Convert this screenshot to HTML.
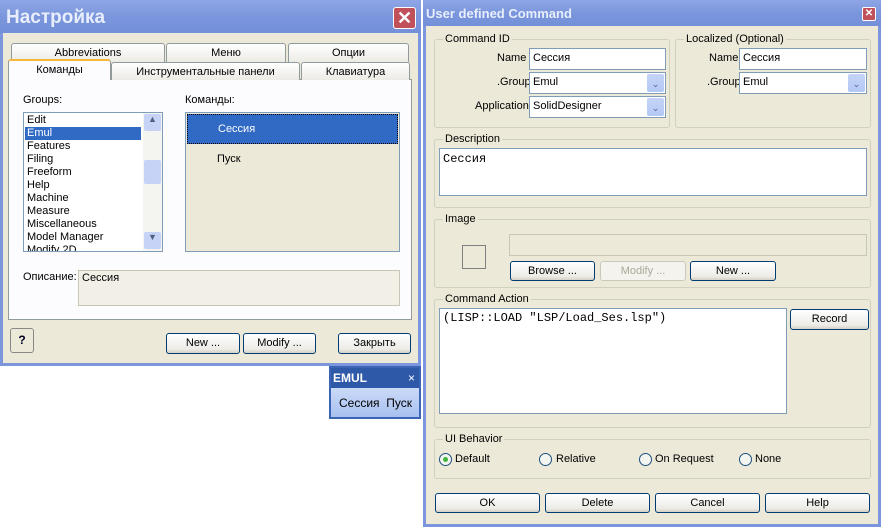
<!DOCTYPE html>
<html><head><meta charset="utf-8"><style>
*{box-sizing:border-box;margin:0;padding:0}
body{width:881px;height:527px;background:#fff;position:relative;overflow:hidden;font-family:"Liberation Sans",sans-serif;font-size:11px;color:#000}
.a{position:absolute}
.win{background:#ece9d8}
.title{background:linear-gradient(#8ea6e6,#7b96dc 50%,#7390d8);color:#e8eefc;font-weight:bold}
.btn{position:absolute;border:1px solid #003c74;border-radius:3px;background:linear-gradient(#fff,#ecebe6 80%,#d6d0c5);text-align:center;font-size:11px;line-height:18px}
.box{position:absolute;background:#fff;border:1px solid #7f9db9}
.grp{position:absolute;border:1px solid #d0d0bf;border-radius:3px}
.gl{position:absolute;top:-7px;left:8px;background:#ece9d8;padding:0 2px;font-size:11px}
.dd{position:absolute;right:1px;top:1px;width:17px;bottom:1px;background:linear-gradient(#c6d3f7,#b4c8f6);border-radius:2px;color:#4d6185;font-size:9px;text-align:center;line-height:20px}
.tab{position:absolute;border:1px solid #919b9c;border-bottom:none;border-radius:3px 3px 0 0;background:linear-gradient(#fff,#ecebe5);text-align:center;line-height:19px}
.rad{position:absolute;width:13px;height:13px;border:1px solid #1c5180;border-radius:50%;background:#f4f4f0}
</style></head><body>
<div class="a win" style="left:0;top:0;width:421px;height:366px;border:3px solid #7b96dc;border-top:none"></div>
<div class="a title" style="left:0;top:0;width:421px;height:33px;font-size:19px;padding:7px 6px">Настройка</div>
<div class="a" style="left:393px;top:7px;width:23px;height:22px;background:#c0505a;border:1px solid #fff;border-radius:3px;color:#fff;font-weight:bold;font-size:18px;text-align:center;line-height:20px">✕</div>
<div class="tab" style="left:11px;top:43px;width:154px;height:19px">Abbreviations</div>
<div class="tab" style="left:166px;top:43px;width:120px;height:19px">Меню</div>
<div class="tab" style="left:288px;top:43px;width:121px;height:19px">Опции</div>
<div class="a" style="left:8px;top:79px;width:404px;height:241px;background:#fcfcfe;border:1px solid #919b9c"></div>
<div class="tab" style="left:8px;top:59px;width:103px;height:21px;background:#fcfcfe;border-top:2px solid #f6b73d">Команды</div>
<div class="tab" style="left:111px;top:62px;width:189px;height:18px;line-height:18px">Инструментальные панели</div>
<div class="tab" style="left:301px;top:62px;width:109px;height:18px;line-height:18px">Клавиатура</div>
<div class="a" style="left:23px;top:94px">Groups:</div>
<div class="a" style="left:185px;top:94px">Команды:</div>
<div class="box" style="left:23px;top:112px;width:140px;height:140px;overflow:hidden;line-height:13px;padding:1px 0 0 3px">Edit<br><span style="background:#316ac5;color:#fff;display:block;margin-left:-2px;padding-left:2px;width:116px">Emul</span>Features<br>Filing<br>Freeform<br>Help<br>Machine<br>Measure<br>Miscellaneous<br>Model Manager<br>Modify 2D</div>
<div class="a" style="left:143px;top:113px;width:19px;height:138px;background:#f4f4f0"></div>
<div class="a" style="left:144px;top:114px;width:17px;height:17px;background:#c6d3f7;border-radius:2px;color:#4d6185;text-align:center;font-size:9px">▲</div>
<div class="a" style="left:144px;top:160px;width:17px;height:24px;background:#c6d3f7;border-radius:2px"></div>
<div class="a" style="left:144px;top:232px;width:17px;height:17px;background:#c6d3f7;border-radius:2px;color:#4d6185;text-align:center;font-size:9px">▼</div>
<div class="a" style="left:185px;top:112px;width:215px;height:140px;background:#ece9d8;border:1px solid #7f9db9"></div>
<div class="a" style="left:187px;top:114px;width:211px;height:30px;background:#316ac5;border:1px dotted #000;color:#fff;padding:8px 30px">Сессия</div>
<div class="a" style="left:217px;top:153px">Пуск</div>
<div class="a" style="left:23px;top:271px">Описание:</div>
<div class="a" style="left:78px;top:270px;width:322px;height:36px;background:#f1efe6;border:1px solid #c8c6b8;padding:1px 3px">Сессия</div>
<div class="btn" style="left:10px;top:328px;width:24px;height:25px;border-color:#888;background:#ece9d8;font-weight:bold;font-size:12px;line-height:23px;color:#002">?</div>
<div class="btn" style="left:166px;top:333px;width:74px;height:21px">New ...</div>
<div class="btn" style="left:243px;top:333px;width:73px;height:21px">Modify ...</div>
<div class="btn" style="left:338px;top:333px;width:73px;height:21px">Закрыть</div>
<div class="a" style="left:329px;top:366px;width:92px;height:53px;background:linear-gradient(#e3ecfc,#a8c0f0);border:2px solid #3c64b4"></div>
<div class="a" style="left:331px;top:368px;width:88px;height:20px;background:#2e59a8;color:#fff;font-weight:bold;font-size:12px;padding:3px 2px">EMUL<span style="position:absolute;right:4px;font-weight:normal">×</span></div>
<div class="a" style="left:339px;top:396px;font-size:12px">Сессия&nbsp; Пуск</div>
<div class="a win" style="left:423px;top:0;width:458px;height:527px;border:3px solid #7b96dc;border-top:none"></div>
<div class="a title" style="left:423px;top:0;width:458px;height:26px;font-size:13px;padding:6px 3px">User defined Command</div>
<div class="a" style="left:862px;top:7px;width:14px;height:14px;background:#c0505a;border:1px solid #fff;border-radius:2px;color:#fff;font-size:10px;text-align:center;line-height:12px;font-weight:bold">✕</div>
<div class="grp" style="left:434px;top:39px;width:236px;height:89px"><span class="gl">Command ID</span></div>
<div class="a" style="left:497px;top:52px">Name</div>
<div class="box" style="left:529px;top:48px;width:137px;height:22px;padding:3px">Сессия</div>
<div class="a" style="left:497px;top:76px">.Group</div>
<div class="box" style="left:529px;top:72px;width:137px;height:22px;padding:3px">Emul<div class="dd">⌄</div></div>
<div class="a" style="left:475px;top:100px">Application</div>
<div class="box" style="left:529px;top:96px;width:137px;height:22px;padding:3px">SolidDesigner<div class="dd">⌄</div></div>
<div class="grp" style="left:675px;top:39px;width:196px;height:89px"><span class="gl">Localized (Optional)</span></div>
<div class="a" style="left:709px;top:52px">Name</div>
<div class="box" style="left:739px;top:48px;width:128px;height:22px;padding:3px">Сессия</div>
<div class="a" style="left:707px;top:76px">.Group</div>
<div class="box" style="left:739px;top:72px;width:128px;height:22px;padding:3px">Emul<div class="dd">⌄</div></div>
<div class="grp" style="left:434px;top:139px;width:437px;height:69px"><span class="gl">Description</span></div>
<div class="box" style="left:439px;top:148px;width:428px;height:48px;padding:3px;font-family:'Liberation Mono',monospace;font-size:12px">Сессия</div>
<div class="grp" style="left:434px;top:219px;width:437px;height:69px"><span class="gl">Image</span></div>
<div class="a" style="left:462px;top:245px;width:24px;height:24px;border:1px solid #808080"></div>
<div class="a" style="left:509px;top:234px;width:358px;height:22px;border:1px solid #c8c6b8"></div>
<div class="btn" style="left:510px;top:261px;width:85px;height:20px">Browse ...</div>
<div class="btn" style="left:600px;top:261px;width:86px;height:20px;border-color:#cac8bb;background:#f4f3ee;color:#aca899">Modify ...</div>
<div class="btn" style="left:690px;top:261px;width:86px;height:20px">New ...</div>
<div class="grp" style="left:434px;top:299px;width:437px;height:129px"><span class="gl">Command Action</span></div>
<div class="box" style="left:439px;top:308px;width:348px;height:106px;padding:2px 3px;font-family:'Liberation Mono',monospace;font-size:12px">(LISP::LOAD "LSP/Load_Ses.lsp")</div>
<div class="btn" style="left:790px;top:309px;width:79px;height:21px">Record</div>
<div class="grp" style="left:434px;top:439px;width:437px;height:40px"><span class="gl">UI Behavior</span></div>
<div class="rad" style="left:439px;top:453px"><div style="position:absolute;left:3px;top:3px;width:5px;height:5px;border-radius:50%;background:#3fb53f"></div></div>
<div class="a" style="left:455px;top:453px">Default</div>
<div class="rad" style="left:539px;top:453px"></div><div class="a" style="left:556px;top:453px">Relative</div>
<div class="rad" style="left:639px;top:453px"></div><div class="a" style="left:655px;top:453px">On Request</div>
<div class="rad" style="left:739px;top:453px"></div><div class="a" style="left:755px;top:453px">None</div>
<div class="btn" style="left:435px;top:493px;width:105px;height:20px">OK</div>
<div class="btn" style="left:545px;top:493px;width:105px;height:20px">Delete</div>
<div class="btn" style="left:655px;top:493px;width:105px;height:20px">Cancel</div>
<div class="btn" style="left:765px;top:493px;width:105px;height:20px">Help</div>
</body></html>
